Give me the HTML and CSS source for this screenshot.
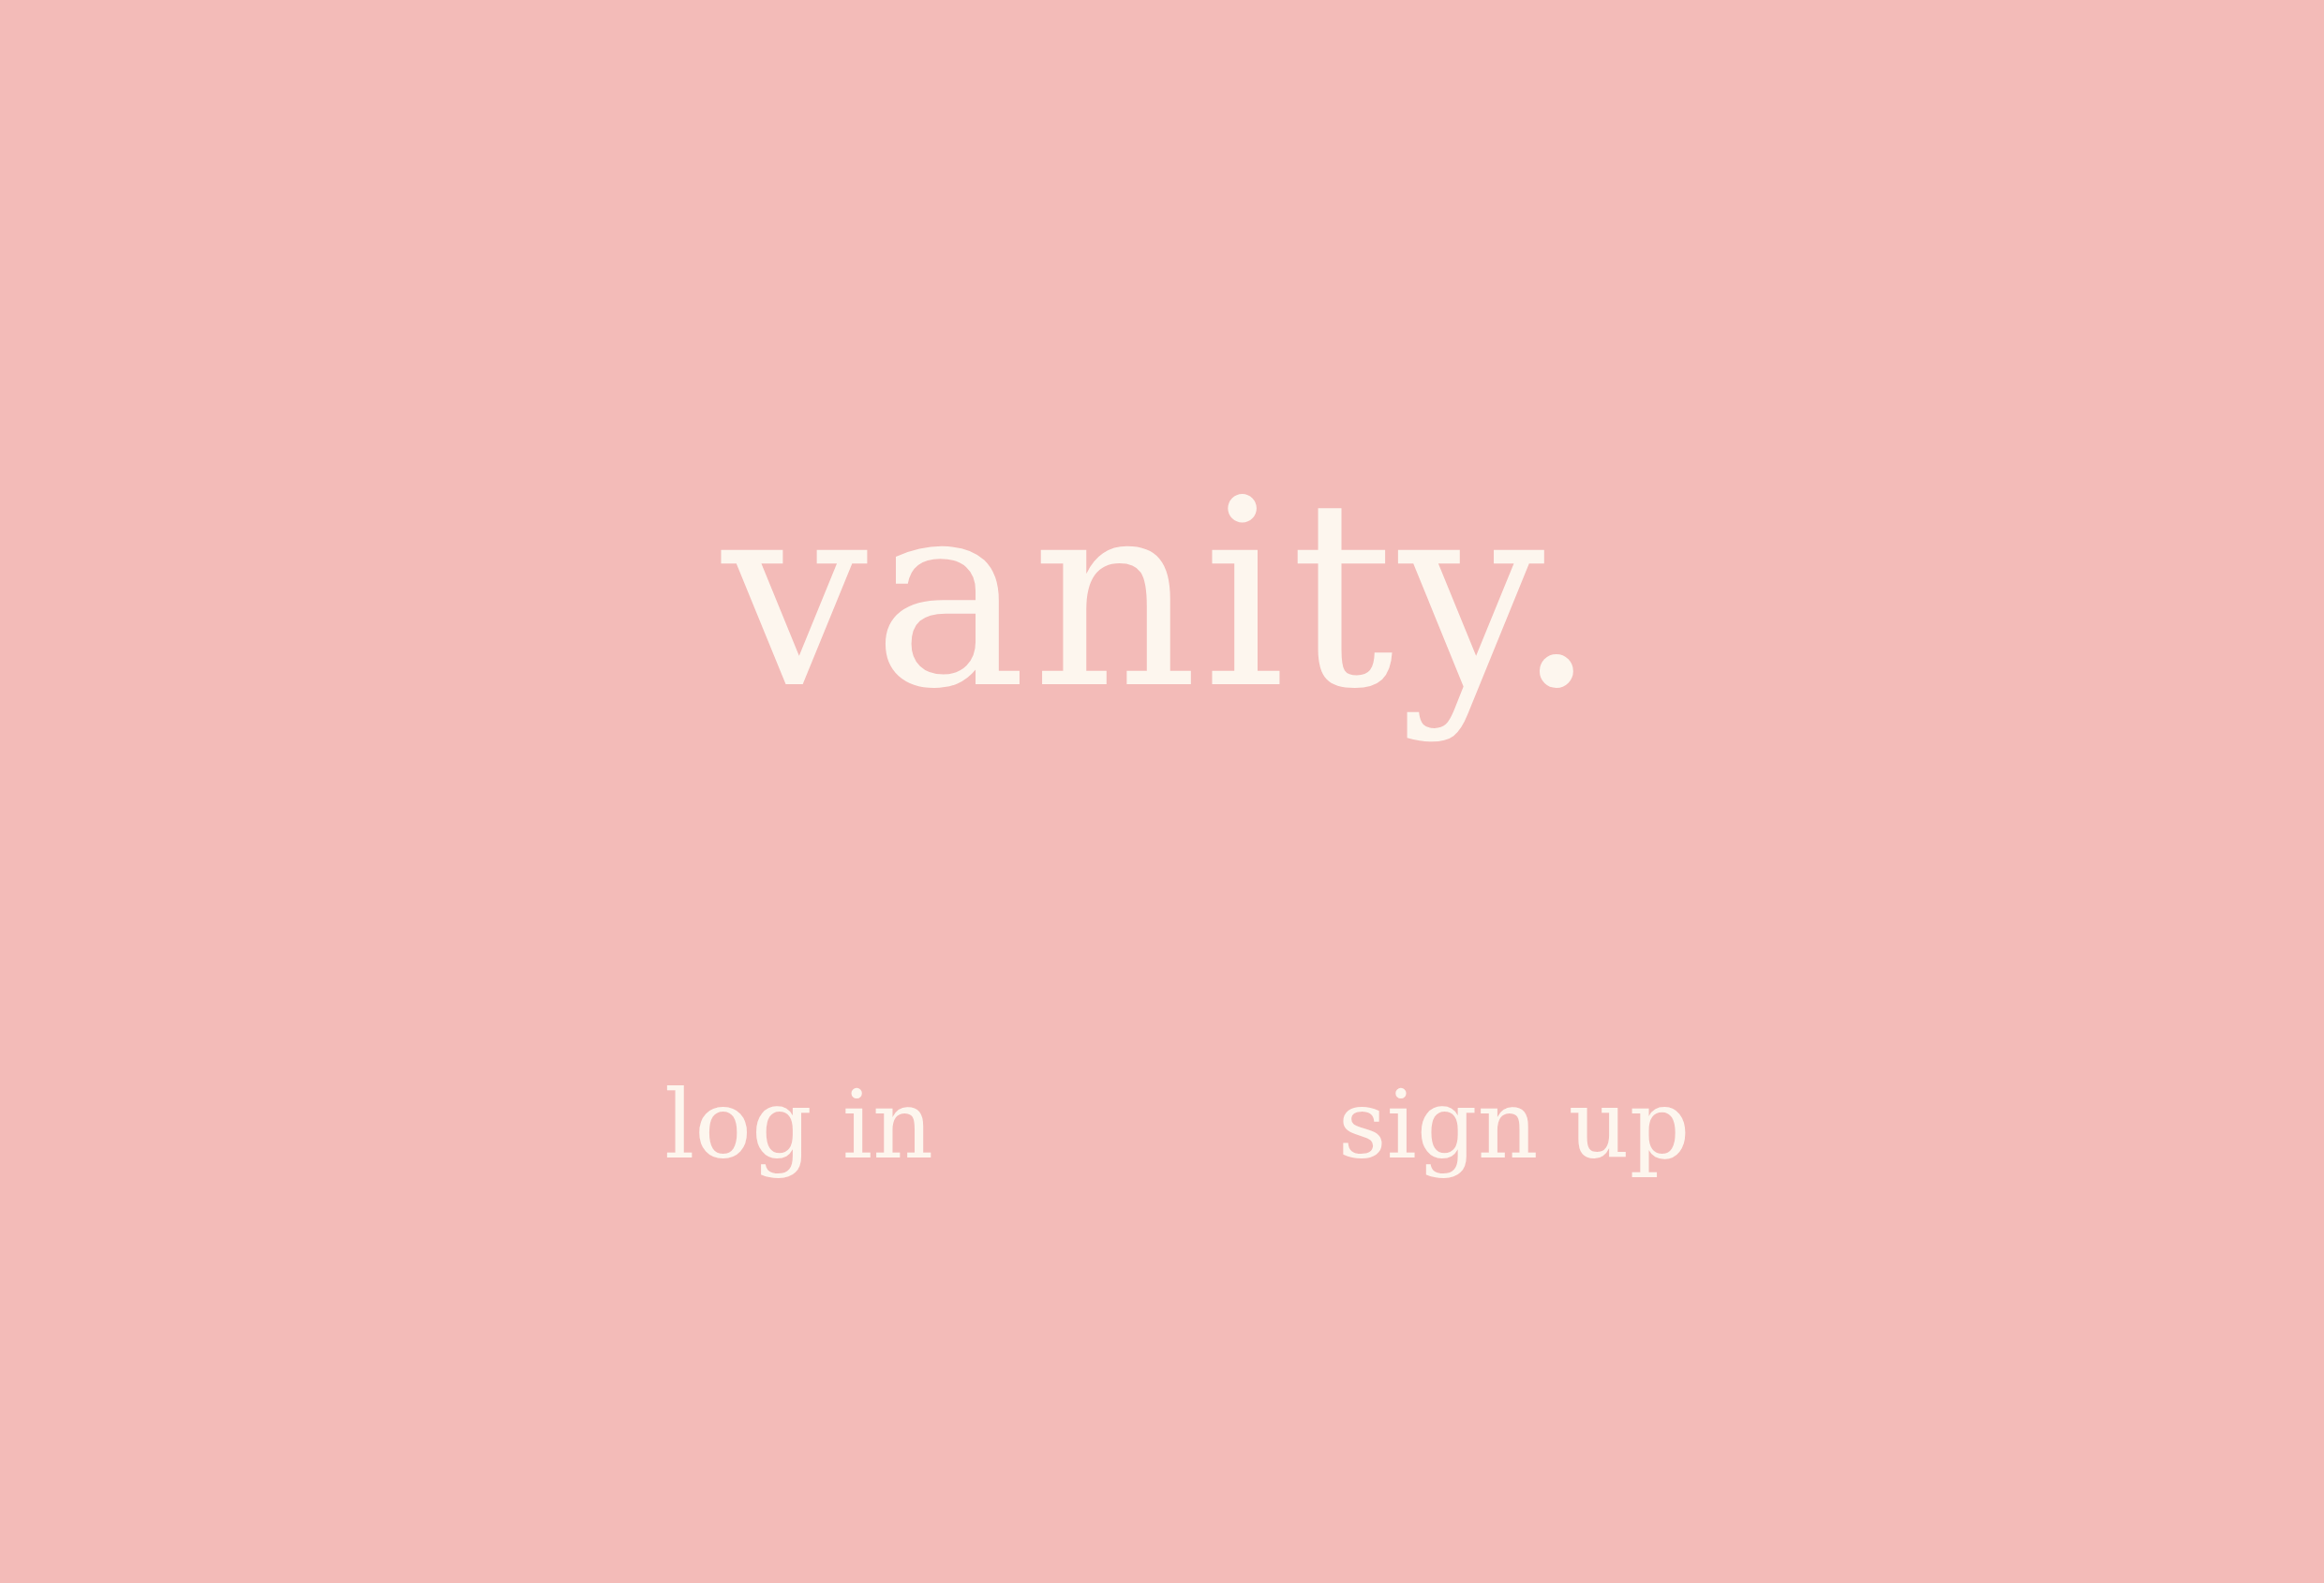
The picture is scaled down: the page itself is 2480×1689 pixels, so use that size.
FILE: index.html
```html
<!DOCTYPE html>
<html lang="en">
<head>
<meta charset="utf-8">
<title>vanity.</title>
<link rel="stylesheet" href="styles.css">
</head>
<body>
<main class="landing">
  <h1 class="brand">vanity.</h1>
  <nav class="actions">
    <a class="action" href="#">log in</a>
    <a class="action" href="#">sign up</a>
  </nav>
</main>
</body>
</html>
```
FILE: styles.css
```css
html, body {
  margin: 0;
  padding: 0;
  background: #f3bbb8;
}
body {
  width: 2480px;
  height: 1689px;
  overflow: hidden;
  font-family: "DejaVu Serif", serif;
  color: #fdf6ee;
}
.landing {
  display: flex;
  flex-direction: column;
  align-items: center;
  padding-top: 497px;
}
.brand {
  margin: 0;
  font-weight: normal;
  font-size: 276px;
  line-height: 1;
  letter-spacing: 5px;
}
.actions {
  margin-top: 377px;
  margin-right: 12px;
  display: grid;
  grid-template-columns: 763px 763px;
  justify-items: center;
}
.action {
  color: #fdf6ee;
  text-decoration: none;
  font-size: 101px;
  line-height: 1;
}
```
